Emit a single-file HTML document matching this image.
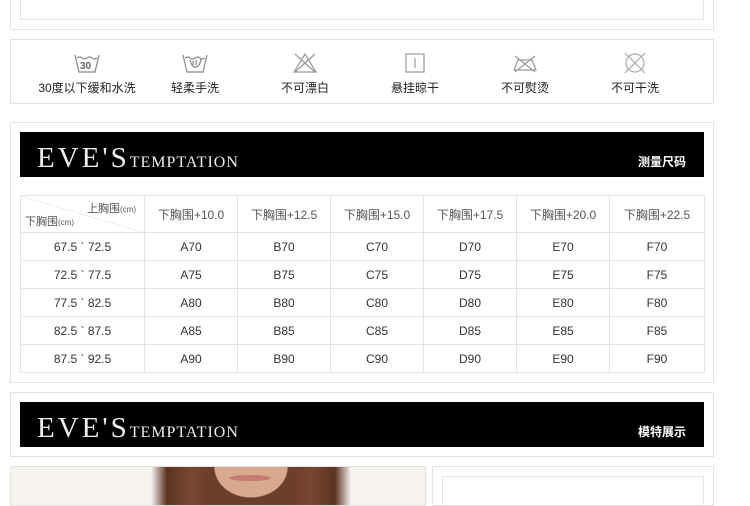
<!DOCTYPE html>
<html><head><meta charset="utf-8"><style>
*{margin:0;padding:0;box-sizing:border-box}
body{width:750px;height:500px;overflow:hidden;background:#fff;font-family:"Liberation Sans","Noto Sans CJK SC",sans-serif;position:relative}
.b{position:absolute;border:1px solid #e3e3e3;background:#fff}
.ban{position:absolute;background:#000;left:20px;width:684px;height:45px}
.logo{position:absolute;left:17px;top:10px;color:#eee;font-family:"Liberation Serif",serif;font-size:29px;letter-spacing:3px;white-space:nowrap}
.logo small{font-size:16px;letter-spacing:1px}
.bt{position:absolute;right:18px;top:21px;color:#fff;font-size:12px;font-weight:bold}
.ic{position:absolute;top:52px;width:110px;text-align:center}
.ic svg{display:block;margin:0 auto}
.ic div{font-size:12px;color:#222;margin-top:5px}
table{position:absolute;left:20px;top:195px;border-collapse:collapse;font-size:12px;color:#333}
td{border:1px solid #e3e3e3;text-align:center;height:28px;padding:0}
tr.h td{height:37px;color:#555}
</style></head><body>
<div class="b" style="left:10px;top:-5px;width:704px;height:35px"></div>
<div class="b" style="left:20px;top:-5px;width:684px;height:25px"></div>

<div class="b" style="left:10px;top:39px;width:704px;height:65px"></div>
<div class="ic" style="left:32px"><svg width="30" height="22" viewBox="0 0 30 22" fill="none" stroke="#888" stroke-width="1.2"><path d="M3 3 L7 20 H23 L27 3"/><path d="M5 6 q3-2 5 0 t5 0 t5 0 t5 0"/><text x="8" y="17" font-size="10" font-weight="bold" fill="#666" stroke="none" font-family="Liberation Sans">30</text></svg><div>30度以下缓和水洗</div></div>
<div class="ic" style="left:140px"><svg width="30" height="22" viewBox="0 0 30 22" fill="none" stroke="#888" stroke-width="1.2"><path d="M3 3 L7 20 H23 L27 3"/><path d="M5 6 q3-2 5 0 t5 0 t5 0 t5 0"/><path d="M10 8 q2 8 6 7 q4-1 5-8 M13 9v4 M16 8v5"/></svg><div>轻柔手洗</div></div>
<div class="ic" style="left:250px"><svg width="30" height="22" viewBox="0 0 30 22" fill="none" stroke="#999" stroke-width="1.2"><path d="M15 2 L4 20 H26 Z M5 2 L25 20 M25 2 L5 20"/></svg><div>不可漂白</div></div>
<div class="ic" style="left:360px"><svg width="30" height="22" viewBox="0 0 30 22" fill="none" stroke="#999" stroke-width="1.2"><rect x="6" y="2" width="18" height="18"/><path d="M15 6v10"/></svg><div>悬挂晾干</div></div>
<div class="ic" style="left:470px"><svg width="30" height="22" viewBox="0 0 30 22" fill="none" stroke="#999" stroke-width="1.2"><path d="M4 18 L8 8 H22 L26 18 Z M5 4 L25 20 M25 4 L5 20"/></svg><div>不可熨烫</div></div>
<div class="ic" style="left:580px"><svg width="30" height="22" viewBox="0 0 30 22" fill="none" stroke="#aaa" stroke-width="1.2"><circle cx="15" cy="11" r="9"/><path d="M5 1 L25 21 M25 1 L5 21"/></svg><div>不可干洗</div></div>

<div class="b" style="left:10px;top:122px;width:704px;height:261px"></div>
<div class="ban" style="top:132px"><div class="logo">EVE'S<small>TEMPTATION</small></div><div class="bt">测量尺码</div></div>
<table>
<tr class="h"><td style="width:124px;position:relative;background:linear-gradient(to top right,transparent calc(50% - 0.5px),#ddd 50%,transparent calc(50% + 0.5px))"><span style="position:absolute;right:8px;top:4px;font-size:11px;color:#555">上胸围<span style="font-size:8px">(cm)</span></span><span style="position:absolute;left:4px;bottom:3px;font-size:11px;color:#555">下胸围<span style="font-size:8px">(cm)</span></span></td><td style="width:93px">下胸围+10.0</td><td style="width:93px">下胸围+12.5</td><td style="width:93px">下胸围+15.0</td><td style="width:93px">下胸围+17.5</td><td style="width:93px">下胸围+20.0</td><td style="width:95px">下胸围+22.5</td></tr>
<tr><td>67.5 ` 72.5</td><td>A70</td><td>B70</td><td>C70</td><td>D70</td><td>E70</td><td>F70</td></tr>
<tr><td>72.5 ` 77.5</td><td>A75</td><td>B75</td><td>C75</td><td>D75</td><td>E75</td><td>F75</td></tr>
<tr><td>77.5 ` 82.5</td><td>A80</td><td>B80</td><td>C80</td><td>D80</td><td>E80</td><td>F80</td></tr>
<tr><td>82.5 ` 87.5</td><td>A85</td><td>B85</td><td>C85</td><td>D85</td><td>E85</td><td>F85</td></tr>
<tr><td>87.5 ` 92.5</td><td>A90</td><td>B90</td><td>C90</td><td>D90</td><td>E90</td><td>F90</td></tr>
</table>

<div class="b" style="left:10px;top:392px;width:704px;height:65px"></div>
<div class="ban" style="top:402px"><div class="logo">EVE'S<small>TEMPTATION</small></div><div class="bt">模特展示</div></div>

<div class="b" style="left:10px;top:466px;width:416px;height:40px;background:#f6f3ef;overflow:hidden">
<div style="position:absolute;left:140px;top:0;width:200px;height:40px;background:radial-gradient(ellipse 60px 50px at 50% 0%,#d9a98e 0 60%,transparent 62%),linear-gradient(90deg,#f6f3ef 0,#5a3322 8%,#7a4630 20%,#6b3f2a 30%,#6b3f2a 70%,#7a4630 80%,#5a3322 92%,#f6f3ef 100%)"></div>
<div style="position:absolute;left:218px;top:8px;width:42px;height:6px;border-radius:50%;background:#c57a72"></div>
</div>
<div class="b" style="left:432px;top:466px;width:282px;height:40px"></div>
<div class="b" style="left:442px;top:476px;width:262px;height:30px"></div>
</body></html>
